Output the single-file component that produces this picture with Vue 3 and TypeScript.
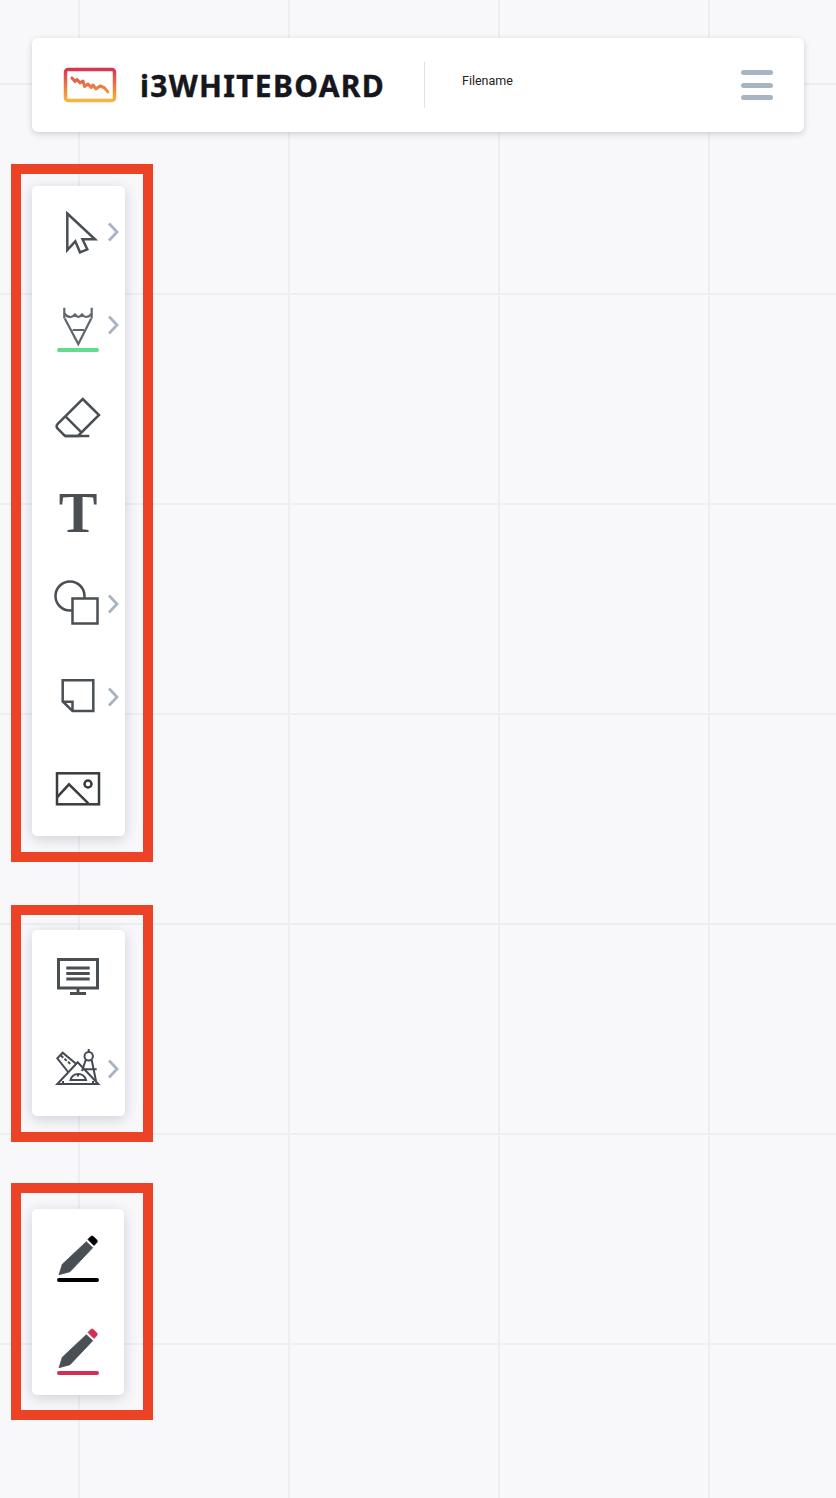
<script setup lang="ts">
interface Tool {
  id: string;
  more?: boolean;
  line?: string;
}

// toolbars, top to bottom
const mainTools: Tool[] = [
  { id: 'select', more: true },
  { id: 'pen', more: true, line: '#62dc8e' },
  { id: 'eraser' },
  { id: 'text' },
  { id: 'shapes', more: true },
  { id: 'note', more: true },
  { id: 'image' },
];
const extraTools: Tool[] = [
  { id: 'slides' },
  { id: 'geometry', more: true },
];
const colorTools = [
  { id: 'black', tip: '#000000', line: '#000000' },
  { id: 'red', tip: '#d32f54', line: '#d32f54' },
];
</script>

<template>
  <div class="page">
    <header class="topbar">
      <svg class="logo" width="54" height="36" viewBox="0 0 54 36">
        <defs>
          <linearGradient id="logoGrad" gradientUnits="userSpaceOnUse" x1="0" y1="1" x2="0" y2="35">
            <stop offset="0" stop-color="#d8304f" />
            <stop offset="1" stop-color="#f9bb3a" />
          </linearGradient>
        </defs>
        <rect x="2.500" y="2.500" width="49" height="31" rx="2.500" fill="none" stroke="url(#logoGrad)" stroke-width="3.500" />
        <path
          d="M9 11 L12 14.500 L14 12.500 L17 16 L20 14 L21.500 19.500 L25 17 L28 20.500 L30 18 L33 22 L37 19 L41 20.500 L45 25"
          fill="none"
          stroke="url(#logoGrad)"
          stroke-width="3"
          stroke-linecap="round"
          stroke-linejoin="round"
        />
      </svg>
      <span class="brand">i3WHITEBOARD</span>
      <span class="divider"></span>
      <span class="filename">Filename</span>
      <button class="menu" aria-label="Menu">
        <span></span>
        <span></span>
        <span></span>
      </button>
    </header>

    <section class="frame frame-main">
      <div class="panel">
        <button v-for="tool in mainTools" :key="tool.id" class="tool">
          <svg class="icon" width="93" height="93" viewBox="0 0 93 93">
            <g v-if="tool.id === 'select'" class="line">
              <path d="M35.300 27.500 L63 53.300 L50.500 53.300 L55.300 63.300 L48 66.300 L43.300 55.300 L35.300 64 Z" />
            </g>
            <g v-else-if="tool.id === 'pen'" class="line thin">
              <path d="M32.300 28.700 V39.500 M59.700 28.700 V39.500" />
              <path d="M32.300 34.500 Q35 38 38.700 38 Q41 38 43 35.500 Q45 37.700 46.300 38 Q48 37.700 50 35.500 Q52 38 54 38 Q57.500 38 59.700 34.500" />
              <path d="M32.800 39.500 L46.300 65 L59.200 39.500 M40.700 51 H52" />
            </g>
            <g v-else-if="tool.id === 'eraser'" class="line">
              <path d="M50.700 27 L67 43 L46 64 H33 L25.500 56.500 Q23.700 54 25.500 52 Z" />
              <path d="M33.700 44.700 L49.700 60.700 M33 64 H57.300" />
            </g>
            <text v-else-if="tool.id === 'text'" class="glyph" x="46" y="66.500" text-anchor="middle">T</text>
            <g v-else-if="tool.id === 'shapes'" class="line">
              <circle cx="38" cy="38" r="14.500" />
              <rect x="40.500" y="40.500" width="25" height="25" fill="#fff" />
            </g>
            <g v-else-if="tool.id === 'note'" class="line">
              <path d="M30.700 29.300 H61.300 V60 H40.500 L30.700 50.500 Z" />
              <path d="M30.700 50.700 H40.500 V60" />
            </g>
            <g v-else-if="tool.id === 'image'" class="line dark">
              <rect x="25" y="29.300" width="42" height="31" />
              <circle cx="56" cy="40" r="3.500" />
              <path d="M25 53.300 L37 40.300 L56.300 59.300" />
            </g>
          </svg>
          <span v-if="tool.line" class="underline" :style="{ background: tool.line }"></span>
          <svg v-if="tool.more" class="chevron" width="12" height="20" viewBox="0 0 12 20">
            <path d="M2 1.500 L10 10 L2 18.500" />
          </svg>
        </button>
      </div>
    </section>

    <section class="frame frame-extra">
      <div class="panel">
        <button v-for="tool in extraTools" :key="tool.id" class="tool">
          <svg class="icon" width="93" height="93" viewBox="0 0 93 93">
            <g v-if="tool.id === 'slides'" class="line">
              <rect x="26.500" y="29.500" width="39" height="28.500" stroke-width="3" />
              <path d="M34.300 38 H57.700 M34.300 43.500 H57.700 M34.300 49 H57.700 M46 58.500 V63 M38 63.500 H54" stroke-width="2.800" />
            </g>
            <g v-else class="line fine">
              <path d="M25.300 61 H66.300 L45.700 39.300 Z" />
              <path d="M36.500 49.500 L25.300 35.300 L30.700 29.700 L44 40.800" />
              <path d="M29 32.500 L31.200 34.700 M32.500 35.700 L34.700 37.900 M36 38.700 L38.200 40.900" />
              <circle cx="56.700" cy="33.300" r="4.200" />
              <path d="M56.700 26 V29 M53.700 37 L50 48 M59.700 37 L64 58 M50.700 46.300 H64.700" />
              <path d="M38.500 57 A8 8 0 0 1 54 57 Z" />
              <path d="M46 51.500 V53.500 M31 60 V58 M61 60 V58" />
            </g>
          </svg>
          <svg v-if="tool.more" class="chevron" width="12" height="20" viewBox="0 0 12 20">
            <path d="M2 1.500 L10 10 L2 18.500" />
          </svg>
        </button>
      </div>
    </section>

    <section class="frame frame-colors">
      <div class="panel narrow">
        <button v-for="pen in colorTools" :key="pen.id" class="tool">
          <svg class="icon" width="93" height="93" viewBox="0 0 93 93">
            <path d="M27 65.700 L30.300 55.300 L54.300 32.700 L60.700 38.700 L38 62.700 Z" fill="#4a4f54" stroke="#4a4f54" stroke-width="0.800" stroke-linejoin="round" />
            <path d="M56 30.500 L58.800 27.500 Q60 26.500 61.300 27.500 L64.800 31 Q65.800 32.300 64.800 33.500 L62 36.500 Z" :fill="pen.tip" stroke-linejoin="round" :stroke="pen.tip" stroke-width="0.800" />
          </svg>
          <span class="underline" :style="{ background: pen.line }"></span>
        </button>
      </div>
    </section>
  </div>
</template>

<style scoped>
.page {
  box-sizing: border-box;
  width: 836px;
  height: 1498px;
  padding-top: 38px;
  overflow: hidden;
  background-color: #f8f8fb;
  background-image:
    linear-gradient(to right, #eceef2 2px, transparent 2px),
    linear-gradient(to bottom, #eceef2 2px, transparent 2px);
  background-size: 210px 210px;
  background-position: 78px 83px;
}

.topbar {
  box-sizing: border-box;
  display: flex;
  align-items: center;
  width: 772px;
  height: 94px;
  margin-left: 32px;
  padding: 0 31px 0 31px;
  background: #fff;
  border-radius: 6px;
  box-shadow: 0 2px 6px rgba(40, 45, 60, 0.2);
}

.logo {
  flex: none;
}

.brand {
  width: 284px;
  margin-left: 23px;
  font-family: "Noto Sans", sans-serif;
  font-size: 30px;
  font-weight: 700;
  letter-spacing: 1.3px;
  color: #16161d;
  white-space: nowrap;
  -webkit-text-stroke: 0.4px #16161d;
}

.divider {
  flex: none;
  width: 1px;
  height: 46px;
  background: #dfe3e8;
}

.filename {
  align-self: flex-start;
  margin: 35px 0 0 37px;
  font-family: Roboto, sans-serif;
  font-size: 12.500px;
  line-height: 16px;
  color: #222;
}

.menu {
  display: flex;
  flex-direction: column;
  gap: 7.500px;
  width: 32px;
  margin-left: auto;
  padding: 0;
  border: 0;
  background: none;
}

.menu span {
  height: 5px;
  border-radius: 2.500px;
  background: #a9b4c2;
}

.frame {
  box-sizing: border-box;
  width: 142px;
  margin-left: 11px;
  padding-left: 11px;
  border: 10px solid #ec4226;
}

.frame-main {
  margin-top: 32px;
  padding-top: 12px;
  padding-bottom: 16px;
}

.frame-extra {
  margin-top: 43px;
  padding-top: 15px;
  padding-bottom: 16px;
}

.frame-colors {
  margin-top: 41px;
  padding-top: 16px;
  padding-bottom: 15px;
}

.panel {
  display: flex;
  flex-direction: column;
  width: 93px;
  background: #fff;
  border-radius: 5px;
  box-shadow: 0 3px 14px rgba(40, 45, 60, 0.2);
}

.panel.narrow {
  width: 92px;
}

.tool {
  position: relative;
  display: block;
  width: 93px;
  height: 93px;
  padding: 0;
  border: 0;
  background: none;
  flex: none;
}

.frame-main .tool:last-child {
  height: 92px;
}

.icon {
  display: block;
}

.line {
  fill: none;
  stroke: #4a4f54;
  stroke-width: 2.500;
}

.line.thin {
  stroke: #62676c;
  stroke-width: 2.200;
}

.line.dark {
  stroke: #3a3d40;
  stroke-width: 2.500;
}

.line.fine {
  stroke: #454a52;
  stroke-width: 2;
}

.glyph {
  font-family: "Liberation Serif", serif;
  font-size: 58px;
  font-weight: 700;
  fill: #4a4f54;
}

.underline {
  position: absolute;
  left: 25px;
  top: 69px;
  width: 42px;
  height: 4px;
  border-radius: 2px;
}

.chevron {
  position: absolute;
  left: 75px;
  top: 36px;
  fill: none;
  stroke: #a9b4c2;
  stroke-width: 2.800;
}
</style>
